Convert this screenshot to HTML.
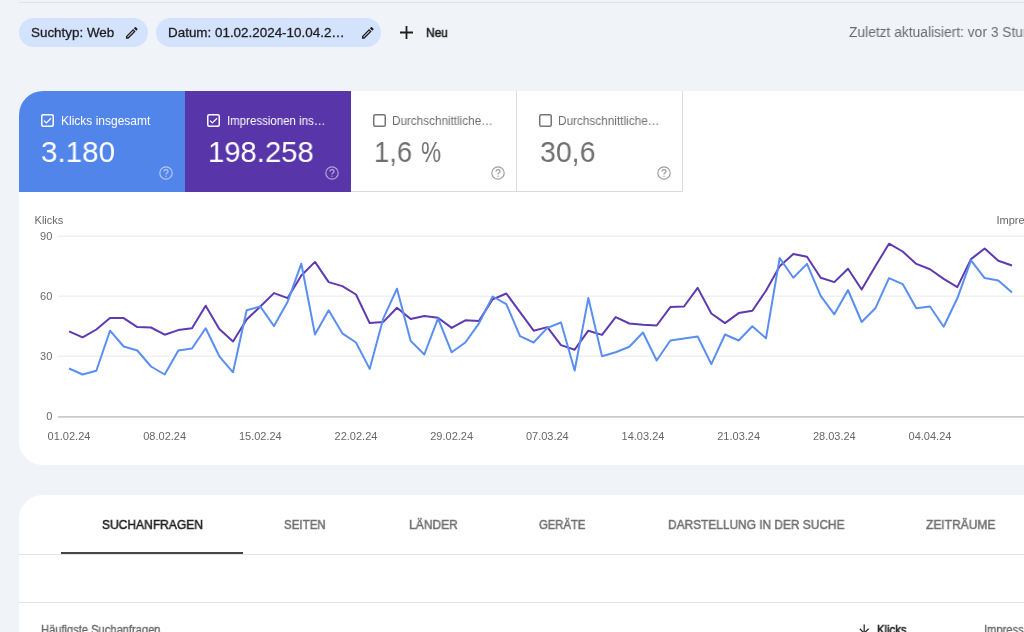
<!DOCTYPE html>
<html><head><meta charset="utf-8">
<style>
*{margin:0;padding:0;box-sizing:border-box}
html,body{width:1024px;height:632px;overflow:hidden;background:#f0f4f9;font-family:"Liberation Sans",sans-serif;position:relative}
.a{position:absolute;white-space:nowrap;line-height:1;transform-origin:0 0;will-change:transform}
.topline{position:absolute;left:19px;top:2px;width:1005px;height:1px;background:#dfe3e8}
.chip{position:absolute;top:17.5px;height:29.5px;border-radius:15px;background:#d3e3fd}
.ct{font-size:13px;color:#1f1f1f;top:25.7px;-webkit-text-stroke:0.3px currentColor}
.card{position:absolute;left:19px;top:91px;width:1010px;height:374px;background:#fff;border-radius:24px 0 0 24px;overflow:hidden}
.m{position:absolute;top:0;height:101px;width:166px}
.ml{font-size:12px;top:23.6px;left:41.8px}
.mv{font-size:30px;top:46.1px;left:23.5px}
.help{position:absolute;left:139.7px;top:74.8px;width:14px;height:14px}
.tabcard{position:absolute;left:19px;top:495px;width:1010px;height:200px;background:#fff;border-radius:24px 0 0 0}
.tab{font-size:13px;color:#707070;top:22.8px;-webkit-text-stroke:0.5px currentColor}
</style></head><body>
<div class="topline"></div>
<div class="chip" style="left:19px;width:129px"></div>
<div class="a ct" id="t_such" style="left:30.7px;transform:scaleX(1.032)">Suchtyp: Web</div>
<svg class="a" style="left:124px;top:24.6px" width="15.6" height="15.6" viewBox="0 0 24 24"><path fill="#1f1f1f" d="M14.06 9.02l.92.92L5.92 19H5v-.92l9.06-9.06M17.66 3c-.25 0-.51.1-.7.29l-1.83 1.83 3.75 3.75 1.83-1.83c.39-.39.39-1.02 0-1.41l-2.34-2.34c-.2-.2-.45-.29-.71-.29zm-3.6 3.19L3 17.25V21h3.75L17.81 9.94l-3.75-3.75z"/></svg>
<div class="chip" style="left:156px;width:224.5px"></div>
<div class="a ct" id="t_dat" style="left:168px;transform:scaleX(1.032)">Datum: 01.02.2024-10.04.2…</div>
<svg class="a" style="left:359.8px;top:24.6px" width="15.6" height="15.6" viewBox="0 0 24 24"><path fill="#1f1f1f" d="M14.06 9.02l.92.92L5.92 19H5v-.92l9.06-9.06M17.66 3c-.25 0-.51.1-.7.29l-1.83 1.83 3.75 3.75 1.83-1.83c.39-.39.39-1.02 0-1.41l-2.34-2.34c-.2-.2-.45-.29-.71-.29zm-3.6 3.19L3 17.25V21h3.75L17.81 9.94l-3.75-3.75z"/></svg>
<svg class="a" style="left:400px;top:25.5px" width="13" height="13" viewBox="0 0 13 13"><path d="M6.5 0 V13 M0 6.5 H13" stroke="#1f1f1f" stroke-width="1.8"/></svg>
<div class="a ct" id="t_neu" style="left:426px;transform:scaleX(0.92);-webkit-text-stroke:0.55px currentColor">Neu</div>
<div class="a" id="t_zul" style="left:848.6px;transform:scaleX(0.985);top:25px;font-size:14px;color:#6b6b6b">Zuletzt aktualisiert: vor 3 Stunden</div>

<div class="card">
  <div class="m" style="left:0;background:#5285ea"></div>
  <div class="m" style="left:166px;background:#5835a8"></div>
  <div class="m" style="left:332px;border-right:1px solid #dadce0;border-bottom:1px solid #dadce0"></div>
  <div class="m" style="left:498px;border-right:1px solid #dadce0;border-bottom:1px solid #dadce0"></div>
  <div class="m" style="left:0;color:#fff"><svg class="a" style="left:22.4px;top:23px" width="13" height="13" viewBox="0 0 13 13"><rect x="0.75" y="0.75" width="11.5" height="11.5" rx="1.5" fill="none" stroke="#fff" stroke-width="1.5"/><path d="M3 6.6 L5.4 8.9 L10 4.3" fill="none" stroke="#fff" stroke-width="1.3"/></svg><div class="a ml" id="l1">Klicks insgesamt</div><div class="a mv" id="v1" style="left:22px;transform:scaleX(0.985)">3.180</div><svg class="help" viewBox="0 0 14 14"><circle cx="7" cy="7" r="6.2" fill="none" stroke="rgba(255,255,255,0.55)" stroke-width="1.2"/><path d="M5 5.6 Q5 3.6 7 3.6 Q9 3.6 9 5.4 Q9 6.5 7.6 7.2 Q7 7.6 7 8.6" fill="none" stroke="rgba(255,255,255,0.55)" stroke-width="1.3"/><circle cx="7" cy="10.3" r="0.7" fill="rgba(255,255,255,0.55)"/></svg></div>
  <div class="m" style="left:166px;color:#fff"><svg class="a" style="left:22.4px;top:23px" width="13" height="13" viewBox="0 0 13 13"><rect x="0.75" y="0.75" width="11.5" height="11.5" rx="1.5" fill="none" stroke="#fff" stroke-width="1.5"/><path d="M3 6.6 L5.4 8.9 L10 4.3" fill="none" stroke="#fff" stroke-width="1.3"/></svg><div class="a ml" id="l2" style="transform:scaleX(0.957)">Impressionen ins…</div><div class="a mv" id="v2" style="left:23px;transform:scaleX(0.975)">198.258</div><svg class="help" viewBox="0 0 14 14"><circle cx="7" cy="7" r="6.2" fill="none" stroke="rgba(255,255,255,0.55)" stroke-width="1.2"/><path d="M5 5.6 Q5 3.6 7 3.6 Q9 3.6 9 5.4 Q9 6.5 7.6 7.2 Q7 7.6 7 8.6" fill="none" stroke="rgba(255,255,255,0.55)" stroke-width="1.3"/><circle cx="7" cy="10.3" r="0.7" fill="rgba(255,255,255,0.55)"/></svg></div>
  <div class="m" style="left:332px;color:#6f6f6f"><svg class="a" style="left:22.4px;top:23px" width="13" height="13" viewBox="0 0 13 13"><rect x="0.75" y="0.75" width="11.5" height="11.5" rx="1.5" fill="none" stroke="#757575" stroke-width="1.5"/></svg><div class="a ml" id="l3" style="left:41.2px;transform:scaleX(0.976)">Durchschnittliche…</div><div class="a mv" id="v3" style="left:23px;transform:scaleX(0.915)">1,6</div><div class="a mv" id="v3b" style="left:69.5px;transform:scaleX(0.75)">%</div><svg class="help" viewBox="0 0 14 14"><circle cx="7" cy="7" r="6.2" fill="none" stroke="#9e9e9e" stroke-width="1.2"/><path d="M5 5.6 Q5 3.6 7 3.6 Q9 3.6 9 5.4 Q9 6.5 7.6 7.2 Q7 7.6 7 8.6" fill="none" stroke="#9e9e9e" stroke-width="1.3"/><circle cx="7" cy="10.3" r="0.7" fill="#9e9e9e"/></svg></div>
  <div class="m" style="left:498px;color:#6f6f6f"><svg class="a" style="left:22.4px;top:23px" width="13" height="13" viewBox="0 0 13 13"><rect x="0.75" y="0.75" width="11.5" height="11.5" rx="1.5" fill="none" stroke="#757575" stroke-width="1.5"/></svg><div class="a ml" id="l4" style="left:41.2px;transform:scaleX(0.982)">Durchschnittliche…</div><div class="a mv" id="v4" style="left:22.5px;transform:scaleX(0.95)">30,6</div><svg class="help" viewBox="0 0 14 14"><circle cx="7" cy="7" r="6.2" fill="none" stroke="#9e9e9e" stroke-width="1.2"/><path d="M5 5.6 Q5 3.6 7 3.6 Q9 3.6 9 5.4 Q9 6.5 7.6 7.2 Q7 7.6 7 8.6" fill="none" stroke="#9e9e9e" stroke-width="1.3"/><circle cx="7" cy="10.3" r="0.7" fill="#9e9e9e"/></svg></div>
</div>
<div class="tabcard">
  <div class="a tab" id="tb1" style="left:82.5px;color:#1f1f1f;transform:scaleX(0.925)">SUCHANFRAGEN</div>
  <div class="a tab" id="tb2" style="left:265px;transform:scaleX(0.887)">SEITEN</div>
  <div class="a tab" id="tb3" style="left:389.7px;transform:scaleX(0.926)">LÄNDER</div>
  <div class="a tab" id="tb4" style="left:520.4px;transform:scaleX(0.868)">GERÄTE</div>
  <div class="a tab" id="tb5" style="left:649.2px;transform:scaleX(0.915)">DARSTELLUNG IN DER SUCHE</div>
  <div class="a tab" id="tb6" style="left:906.9px;transform:scaleX(0.924)">ZEITRÄUME</div>
  <div class="a" style="left:41.5px;top:57px;width:182.3px;height:2px;background:#444746"></div>
  <div class="a" style="left:0;top:59px;width:1010px;height:1px;background:#e3e3e3"></div>
  <div class="a" style="left:0;top:107px;width:1010px;height:1px;background:#e3e3e3"></div>
  <div class="a" id="hs" style="left:22px;top:128.5px;font-size:12px;color:#6a6a6a;transform:scaleX(0.928);-webkit-text-stroke:0.35px currentColor">Häufigste Suchanfragen</div>
  <svg class="a" style="left:837.8px;top:126.8px" width="14.4" height="14.4" viewBox="0 0 24 24"><path fill="#1f1f1f" d="M20 12l-1.41-1.41L13 16.17V4h-2v12.17l-5.58-5.59L4 12l8 8 8-8z"/></svg>
  <div class="a" id="kl" style="left:858.2px;top:129.4px;font-size:12px;color:#262626;transform:scaleX(0.945);-webkit-text-stroke:0.55px currentColor">Klicks</div>
  <div class="a" id="im" style="left:964.8px;top:129.4px;font-size:12px;color:#6a6a6a;transform:scaleX(0.93);-webkit-text-stroke:0.35px currentColor">Impressionen</div>
</div>
<svg class="a" style="left:0;top:0" width="1024" height="632">
  <g stroke="#f0f0f0" stroke-width="1.5">
    <line x1="58" y1="236.3" x2="1024" y2="236.3"/>
    <line x1="58" y1="296.3" x2="1024" y2="296.3"/>
    <line x1="58" y1="356.3" x2="1024" y2="356.3"/>
  </g>
  <line x1="58" y1="416.8" x2="1024" y2="416.8" stroke="#cbcbcb" stroke-width="1.8"/>
  <g font-family="Liberation Sans" font-size="11" fill="#676767">
    <text x="34.6" y="224.3">Klicks</text>
    <text x="996.5" y="224.3">Impressionen</text>
    <text x="52.3" y="240.2" text-anchor="end">90</text>
    <text x="52.3" y="300.2" text-anchor="end">60</text>
    <text x="52.3" y="360.2" text-anchor="end">30</text>
    <text x="52.3" y="420.2" text-anchor="end">0</text>
    <text x="69.00" y="440" text-anchor="middle">01.02.24</text><text x="164.67" y="440" text-anchor="middle">08.02.24</text><text x="260.33" y="440" text-anchor="middle">15.02.24</text><text x="356.00" y="440" text-anchor="middle">22.02.24</text><text x="451.67" y="440" text-anchor="middle">29.02.24</text><text x="547.33" y="440" text-anchor="middle">07.03.24</text><text x="643.00" y="440" text-anchor="middle">14.03.24</text><text x="738.67" y="440" text-anchor="middle">21.03.24</text><text x="834.33" y="440" text-anchor="middle">28.03.24</text><text x="930.00" y="440" text-anchor="middle">04.04.24</text>
  </g>
  <polyline points="69.00,331.30 82.67,337.30 96.33,329.50 110.00,317.90 123.67,318.10 137.33,327.10 151.00,327.50 164.67,334.70 178.33,330.10 192.00,328.30 205.67,305.70 219.33,329.00 233.00,341.50 246.67,319.50 260.33,306.50 274.00,293.10 287.67,298.10 301.33,275.50 315.00,261.90 328.67,282.10 342.33,286.10 356.00,294.50 369.67,323.10 383.33,321.90 397.00,307.70 410.67,319.10 424.33,316.00 438.00,317.70 451.67,327.90 465.33,320.30 479.00,320.90 492.67,299.30 506.33,293.50 520.00,312.10 533.67,330.70 547.33,327.10 561.00,345.10 574.67,349.70 588.33,330.70 602.00,334.90 615.67,317.10 629.33,323.50 643.00,324.70 656.67,325.50 670.33,307.10 684.00,306.50 697.67,287.90 711.33,313.50 725.00,323.10 738.67,313.10 752.33,310.70 766.00,290.70 779.67,266.30 793.33,253.90 807.00,256.70 820.67,277.70 834.33,282.10 848.00,268.70 861.67,289.50 875.33,266.30 889.00,243.70 902.67,251.50 916.33,263.90 930.00,269.30 943.67,278.90 957.33,287.10 971.00,259.10 984.67,248.50 998.33,260.70 1012.00,265.50" fill="none" stroke="#5e3ab0" stroke-width="2" stroke-linejoin="round"/>
  <polyline points="69.00,368.50 82.67,374.50 96.33,370.70 110.00,330.70 123.67,346.50 137.33,350.50 151.00,366.50 164.67,374.50 178.33,350.50 192.00,348.50 205.67,328.30 219.33,356.30 233.00,372.30 246.67,310.30 260.33,306.50 274.00,326.10 287.67,301.70 301.33,263.70 315.00,334.50 328.67,310.30 342.33,333.30 356.00,342.50 369.67,368.90 383.33,318.30 397.00,288.70 410.67,340.90 424.33,354.50 438.00,318.30 451.67,352.30 465.33,342.50 479.00,323.30 492.67,296.50 506.33,304.10 520.00,336.10 533.67,342.50 547.33,327.90 561.00,322.50 574.67,370.50 588.33,298.10 602.00,356.30 615.67,352.30 629.33,346.70 643.00,332.50 656.67,360.50 670.33,340.50 684.00,338.50 697.67,336.50 711.33,364.10 725.00,334.50 738.67,340.50 752.33,326.30 766.00,338.30 779.67,258.00 793.33,277.70 807.00,263.90 820.67,295.90 834.33,314.30 848.00,290.00 861.67,322.00 875.33,308.30 889.00,278.10 902.67,284.10 916.33,308.30 930.00,306.50 943.67,326.70 957.33,298.30 971.00,260.30 984.67,278.10 998.33,280.50 1012.00,292.50" fill="none" stroke="#5a8ff0" stroke-width="2" stroke-linejoin="round"/>
</svg>
</body></html>
